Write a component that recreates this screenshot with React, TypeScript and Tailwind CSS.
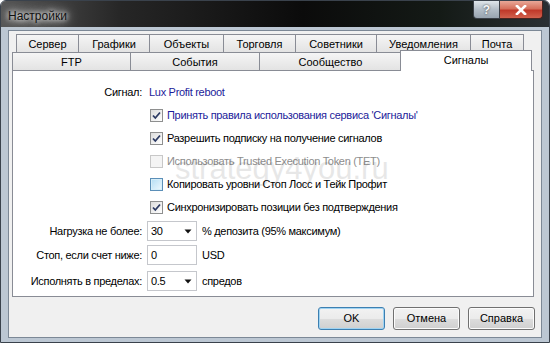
import React from "react";

function Check({ state }: { state: "checked" | "disabled" | "hover" }) {
  if (state === "disabled") {
    return <div className="w-[13px] h-[13px] shrink-0 border border-[#c8c8c8] bg-[#f4f4f4]" />;
  }
  if (state === "hover") {
    return (
      <div className="w-[13px] h-[13px] shrink-0 border border-[#5b8fb8] bg-[#d6eef9] p-[1px]">
        <div className="w-full h-full bg-[linear-gradient(135deg,#b9e0f5,#e9f6fd)]" />
      </div>
    );
  }
  return (
    <div className="w-[13px] h-[13px] shrink-0 border border-[#8e8f8f] bg-[linear-gradient(135deg,#dcdcdc,#ffffff)] flex items-center justify-center">
      <svg width="11" height="11" viewBox="0 0 11 11">
        <path d="M2 5.5 L4.3 8 L9 2.5" fill="none" stroke="#2c3a63" strokeWidth="1.8" />
      </svg>
    </div>
  );
}

function Arrow() {
  return (
    <svg width="8" height="5" viewBox="0 0 8 5">
      <path d="M0.5 0.5 H7.5 L4 4.5 Z" fill="#111" />
    </svg>
  );
}

const row1 = [
  ["Сервер", 63],
  ["Графики", 72],
  ["Объекты", 75],
  ["Торговля", 73],
  ["Советники", 82],
  ["Уведомления", 95],
  ["Почта", 54],
] as const;

const row2 = [
  ["FTP", 119],
  ["События", 130],
  ["Сообщество", 143],
] as const;

export default function App() {
  return (
    <div className="w-[550px] h-[343px] overflow-hidden bg-[#bcc7d3] border border-[#3a424c] rounded-t-[6px] flex flex-col font-['Liberation_Sans',Arial,sans-serif] text-[11px] text-black">
      {/* Title bar */}
      <div className="h-[26px] shrink-0 flex items-start justify-between bg-[linear-gradient(90deg,#555_0%,#262626_22%,#0b0b0b_55%,#141a16_80%,#2a2f33_100%)]">
        <div className="pl-[7px] pt-[6px] text-[12px] text-[#111] [text-shadow:0_0_5px_#fff,0_0_9px_#fff,0_0_14px_#e0e0e0]">
          Настройки
        </div>
        <div className="flex mr-[6px]">
          <div className="w-[27px] h-[18px] border border-[#3b4048] border-t-0 rounded-bl-[4px] bg-[linear-gradient(180deg,#dfe5ea_0%,#b3bdc7_50%,#98a4b0_100%)] flex items-center justify-center text-[12px] font-bold text-[#f4f6f8] [text-shadow:0_0_2px_#333]">
            ?
          </div>
          <div className="w-[43px] h-[18px] border border-[#4a2420] border-t-0 border-l-0 rounded-br-[4px] bg-[linear-gradient(180deg,#e9a898_0%,#d6705c_45%,#c0392a_55%,#d2604c_100%)] flex items-center justify-center">
            <svg width="12" height="10" viewBox="0 0 12 10">
              <path d="M2 1 L10 9 M10 1 L2 9" stroke="#fff" strokeWidth="2.6" strokeLinecap="square" />
            </svg>
          </div>
        </div>
      </div>

      {/* Frame */}
      <div className="flex-1 px-[7px] pt-[3px] pb-[4px] flex flex-col">
        <div className="flex-1 border border-[#7c8896] bg-[#f0f0f0] flex flex-col px-[3px] pt-[3px]">
          {/* Tabs */}
          <div className="flex flex-col h-[36px] relative z-10">
            <div className="flex ml-[4px] h-[19px]">
              {row1.map(([t, w], i) => (
                <div
                  key={t}
                  style={{ width: w }}
                  className={`h-[19px] border border-[#898c95] ${i > 0 ? "-ml-px" : ""} bg-[linear-gradient(180deg,#f5f5f5,#e3e3e3)] flex items-center justify-center pt-[1px]`}
                >
                  {t}
                </div>
              ))}
            </div>
            <div className="flex -mt-px items-end h-[18px]">
              {row2.map(([t, w], i) => (
                <div
                  key={t}
                  style={{ width: w }}
                  className={`h-[18px] border border-[#898c95] border-b-0 ${i > 0 ? "-ml-px" : ""} bg-[linear-gradient(180deg,#f5f5f5,#e3e3e3)] flex items-center justify-center pt-[1px]`}
                >
                  {t}
                </div>
              ))}
              <div className="w-[132px] h-[21px] -ml-[2px] -mb-px border border-[#898c95] border-b-0 bg-white flex items-center justify-center pb-[1px]">
                Сигналы
              </div>
            </div>
          </div>

          {/* Panel */}
          <div className="h-[227px] mr-[4px] border border-[#898c95] bg-white relative pt-[10px] tracking-[-0.3px]">
            <div className="absolute left-[162px] top-[82px] text-[31px] tracking-normal leading-none text-black opacity-[0.09] pointer-events-none [text-shadow:1px_1px_0_#fff]">
              strategy4you.ru
            </div>

            <div className="flex items-center h-[23px]">
              <div className="w-[129px] text-right">Сигнал:</div>
              <div className="ml-[7px] text-[#1c1c9a]">Lux Profit reboot</div>
            </div>

            <div className="flex items-center h-[23px]">
              <div className="w-[129px]" />
              <div className="ml-[8px] flex items-center gap-[4px]">
                <Check state="checked" />
                <span className="text-[#1c1c9a]">Принять правила использования сервиса 'Сигналы'</span>
              </div>
            </div>

            <div className="flex items-center h-[23px]">
              <div className="w-[129px]" />
              <div className="ml-[8px] flex items-center gap-[4px]">
                <Check state="checked" />
                <span>Разрешить подписку на получение сигналов</span>
              </div>
            </div>

            <div className="flex items-center h-[23px]">
              <div className="w-[129px]" />
              <div className="ml-[8px] flex items-center gap-[4px]">
                <Check state="disabled" />
                <span className="text-[#8d8d8d]">Использовать Trusted Execution Token (TET)</span>
              </div>
            </div>

            <div className="flex items-center h-[23px]">
              <div className="w-[129px]" />
              <div className="ml-[8px] flex items-center gap-[4px]">
                <Check state="hover" />
                <span>Копировать уровни Стоп Лосс и Тейк Профит</span>
              </div>
            </div>

            <div className="flex items-center h-[23px]">
              <div className="w-[129px]" />
              <div className="ml-[8px] flex items-center gap-[4px]">
                <Check state="checked" />
                <span>Синхронизировать позиции без подтверждения</span>
              </div>
            </div>

            <div className="flex items-center h-[20px] mt-[2px]">
              <div className="w-[129px] text-right">Нагрузка не более:</div>
              <div className="ml-[5px] w-[50px] h-[20px] border border-[#c5c7cc] bg-white flex items-center justify-between pl-[3px] pr-[4px]">
                <span>30</span>
                <Arrow />
              </div>
              <div className="ml-[5px]">% депозита (95% максимум)</div>
            </div>

            <div className="flex items-center h-[20px] mt-[4px]">
              <div className="w-[129px] text-right">Стоп, если счет ниже:</div>
              <div className="ml-[5px] w-[50px] h-[20px] border border-[#c5c7cc] bg-white flex items-center pl-[3px]">
                <span>0</span>
              </div>
              <div className="ml-[5px]">USD</div>
            </div>

            <div className="flex items-center h-[20px] mt-[6px]">
              <div className="w-[129px] text-right">Исполнять в пределах:</div>
              <div className="ml-[5px] w-[50px] h-[20px] border border-[#c5c7cc] bg-white flex items-center justify-between pl-[3px] pr-[4px]">
                <span>0.5</span>
                <Arrow />
              </div>
              <div className="ml-[5px]">спредов</div>
            </div>
          </div>

          {/* Buttons */}
          <div className="flex justify-end gap-[8px] mt-[10px] mr-[3px]">
            <div className="w-[67px] h-[23px] rounded-[3px] border border-[#3c7fb1] bg-[linear-gradient(180deg,#f2f2f2_0%,#ebebeb_50%,#dddddd_51%,#cfcfcf_100%)] [box-shadow:inset_0_0_0_1px_#9fd3f2] flex items-center justify-center">
              OK
            </div>
            <div className="w-[67px] h-[23px] rounded-[3px] border border-[#707070] bg-[linear-gradient(180deg,#f2f2f2_0%,#ebebeb_50%,#dddddd_51%,#cfcfcf_100%)] [box-shadow:inset_0_0_0_1px_#fcfcfc] flex items-center justify-center">
              Отмена
            </div>
            <div className="w-[67px] h-[23px] rounded-[3px] border border-[#707070] bg-[linear-gradient(180deg,#f2f2f2_0%,#ebebeb_50%,#dddddd_51%,#cfcfcf_100%)] [box-shadow:inset_0_0_0_1px_#fcfcfc] flex items-center justify-center">
              Справка
            </div>
          </div>
        </div>
      </div>
    </div>
  );
}
